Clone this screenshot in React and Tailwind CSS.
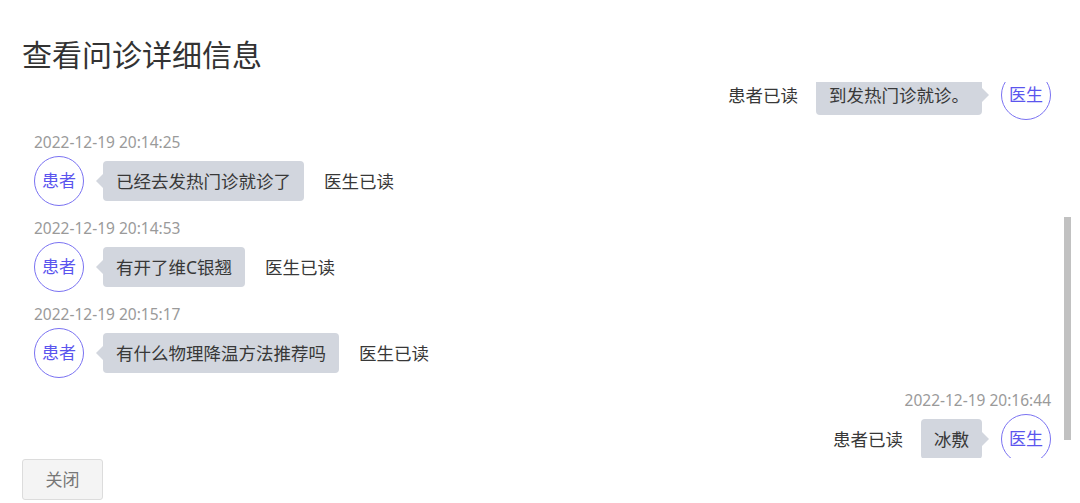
import { useLayoutEffect, useRef } from 'react';

const messages = [
  { id: 1, from: 'patient', time: '2022-12-19 20:10:32', text: '医生您好，我昨晚开始发烧', read: '医生已读' },
  { id: 2, from: 'doctor', time: '2022-12-19 20:12:08', text: '体温多少度？', read: '患者已读' },
  { id: 3, from: 'doctor', time: '2022-12-19 20:13:40', text: '到发热门诊就诊。', read: '患者已读' },
  { id: 4, from: 'patient', time: '2022-12-19 20:14:25', text: '已经去发热门诊就诊了', read: '医生已读' },
  { id: 5, from: 'patient', time: '2022-12-19 20:14:53', text: '有开了维C银翘', read: '医生已读' },
  { id: 6, from: 'patient', time: '2022-12-19 20:15:17', text: '有什么物理降温方法推荐吗', read: '医生已读' },
  { id: 7, from: 'doctor', time: '2022-12-19 20:16:44', text: '冰敷', read: '患者已读' },
];

function Avatar({ label }) {
  return (
    <div className="w-[50px] h-[50px] shrink-0 rounded-full border border-[#7a72f2] flex items-center justify-center text-[17px] text-[#5b55ee]">
      {label}
    </div>
  );
}

function Bubble({ text, side }) {
  const arrow =
    side === 'left' ? (
      <div className="w-0 h-0 border-y-[7px] border-y-transparent border-r-[7px] border-r-[#d2d6de]" />
    ) : (
      <div className="w-0 h-0 border-y-[7px] border-y-transparent border-l-[7px] border-l-[#d2d6de]" />
    );
  return (
    <div className="flex items-center">
      {side === 'left' && arrow}
      <div className="h-[40px] px-[13px] flex items-center rounded-[4px] bg-[#d2d6de] text-[17.5px] text-[#383838] whitespace-nowrap">
        {text}
      </div>
      {side === 'right' && arrow}
    </div>
  );
}

function Message({ msg }) {
  const mine = msg.from === 'doctor';
  return (
    <div className={`flex flex-col mb-[12px] ${mine ? 'items-end' : 'items-start'}`}>
      <div className="leading-[20px] text-[15.5px] text-[#9a9a9a]">{msg.time}</div>
      <div className="mt-[4px] h-[50px] flex items-center">
        {mine ? (
          <>
            <span className="mr-[18px] text-[17.5px] text-[#383838]">{msg.read}</span>
            <Bubble text={msg.text} side="right" />
            <div className="w-[12px]" />
            <Avatar label="医生" />
          </>
        ) : (
          <>
            <Avatar label="患者" />
            <div className="w-[12px]" />
            <Bubble text={msg.text} side="left" />
            <span className="ml-[20px] text-[17.5px] text-[#383838]">{msg.read}</span>
          </>
        )}
      </div>
    </div>
  );
}

export default function App() {
  const listRef = useRef(null);

  useLayoutEffect(() => {
    if (listRef.current) listRef.current.scrollTop = 228;
  }, []);

  return (
    <div className="w-[1080px] h-[503px] bg-white pl-[22px] pr-[8px] pt-[35px] font-['Noto_Sans','Noto_Sans_CJK_SC',sans-serif] overflow-hidden">
      <h2 className="leading-[40px] text-[30px] text-[#333]">查看问诊详细信息</h2>

      {/* chat history, native scrollbar hidden, thumb drawn on top */}
      <div className="relative mt-[7px]">
        <div ref={listRef} className="h-[376px] overflow-y-auto [scrollbar-width:none]">
          <div className="pl-[12px] pr-[21px] pt-[20px] pb-[16px]">
            {messages.map((m) => (
              <Message key={m.id} msg={m} />
            ))}
          </div>
        </div>
        <div className="absolute right-px top-[135px] w-[7px] h-[223px] bg-[#c1c1c1]" />
      </div>

      <div className="mt-px">
        <button className="w-[81px] h-[41px] rounded-[3px] border border-[#dcdcdc] bg-[#f4f4f4] text-[17px] text-[#777]">
          关闭
        </button>
      </div>
    </div>
  );
}
